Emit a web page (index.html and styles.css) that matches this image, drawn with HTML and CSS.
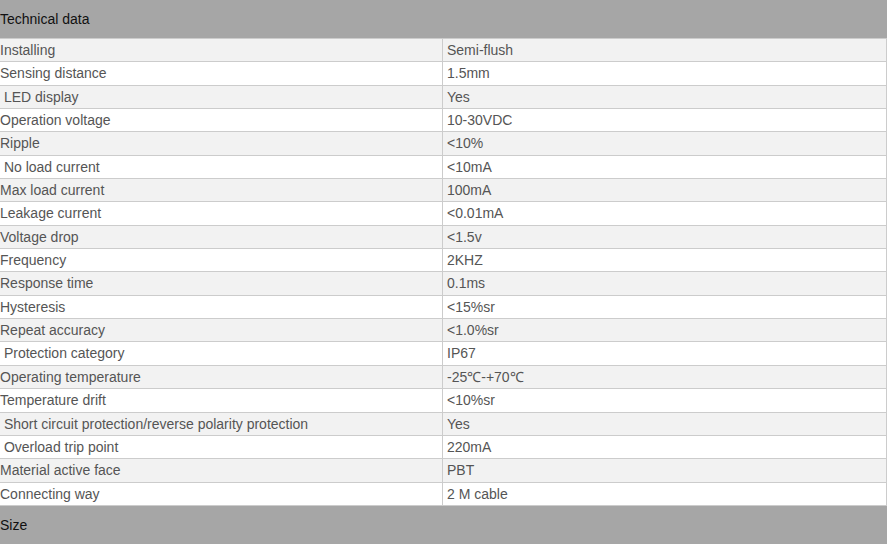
FILE: index.html
```html
<!DOCTYPE html>
<html lang="en">
<head>
<meta charset="utf-8">
<title>Technical data</title>
<link rel="stylesheet" href="styles.css">
</head>
<body>
<div class="page">
  <div class="band">Technical data</div>
  <table class="spec">
    <tbody>
      <tr><td class="k">Installing</td><td class="v">Semi-flush</td></tr>
      <tr><td class="k">Sensing distance</td><td class="v">1.5mm</td></tr>
      <tr><td class="k">&nbsp;LED display</td><td class="v">Yes</td></tr>
      <tr><td class="k">Operation voltage</td><td class="v">10-30VDC</td></tr>
      <tr><td class="k">Ripple</td><td class="v">&lt;10%</td></tr>
      <tr><td class="k">&nbsp;No load current</td><td class="v">&lt;10mA</td></tr>
      <tr><td class="k">Max load current</td><td class="v">100mA</td></tr>
      <tr><td class="k">Leakage current</td><td class="v">&lt;0.01mA</td></tr>
      <tr><td class="k">Voltage drop</td><td class="v">&lt;1.5v</td></tr>
      <tr><td class="k">Frequency</td><td class="v">2KHZ</td></tr>
      <tr><td class="k">Response time</td><td class="v">0.1ms</td></tr>
      <tr><td class="k">Hysteresis</td><td class="v">&lt;15%sr</td></tr>
      <tr><td class="k">Repeat accuracy</td><td class="v">&lt;1.0%sr</td></tr>
      <tr><td class="k">&nbsp;Protection category</td><td class="v">IP67</td></tr>
      <tr><td class="k">Operating temperature</td><td class="v">-25℃-+70℃</td></tr>
      <tr><td class="k">Temperature drift</td><td class="v">&lt;10%sr</td></tr>
      <tr><td class="k">&nbsp;Short circuit protection/reverse polarity protection</td><td class="v">Yes</td></tr>
      <tr><td class="k">&nbsp;Overload trip point</td><td class="v">220mA</td></tr>
      <tr><td class="k">Material active face</td><td class="v">PBT</td></tr>
      <tr><td class="k">Connecting way</td><td class="v">2 M cable</td></tr>
    </tbody>
  </table>
  <div class="band">Size</div>
</div>
</body>
</html>
```
FILE: styles.css
```css
html, body {
  margin: 0;
  padding: 0;
  background: #ffffff;
}
body {
  font-family: "Liberation Sans", Arial, sans-serif;
  font-size: 14px;
}
.page {
  width: 887px;
}
.band {
  height: 38px;
  line-height: 38px;
  background: #a6a6a6;
  color: #111111;
  font-size: 14px;
  white-space: nowrap;
}
.spec {
  width: 887px;
  border-collapse: collapse;
  table-layout: fixed;
  color: #555555;
}
.spec td {
  border: 1px solid #cccccc;
  padding: 0;
  height: 22.35px;
  line-height: 22.35px;
  white-space: nowrap;
  overflow: hidden;
}
.spec td.k {
  width: 442px;
  border-left: none;
  padding-left: 0;
}
.spec td.v {
  padding-left: 4px;
}
.spec tr:nth-child(odd) td {
  background: #f2f2f2;
}
.spec tr:nth-child(even) td {
  background: #ffffff;
}
```
